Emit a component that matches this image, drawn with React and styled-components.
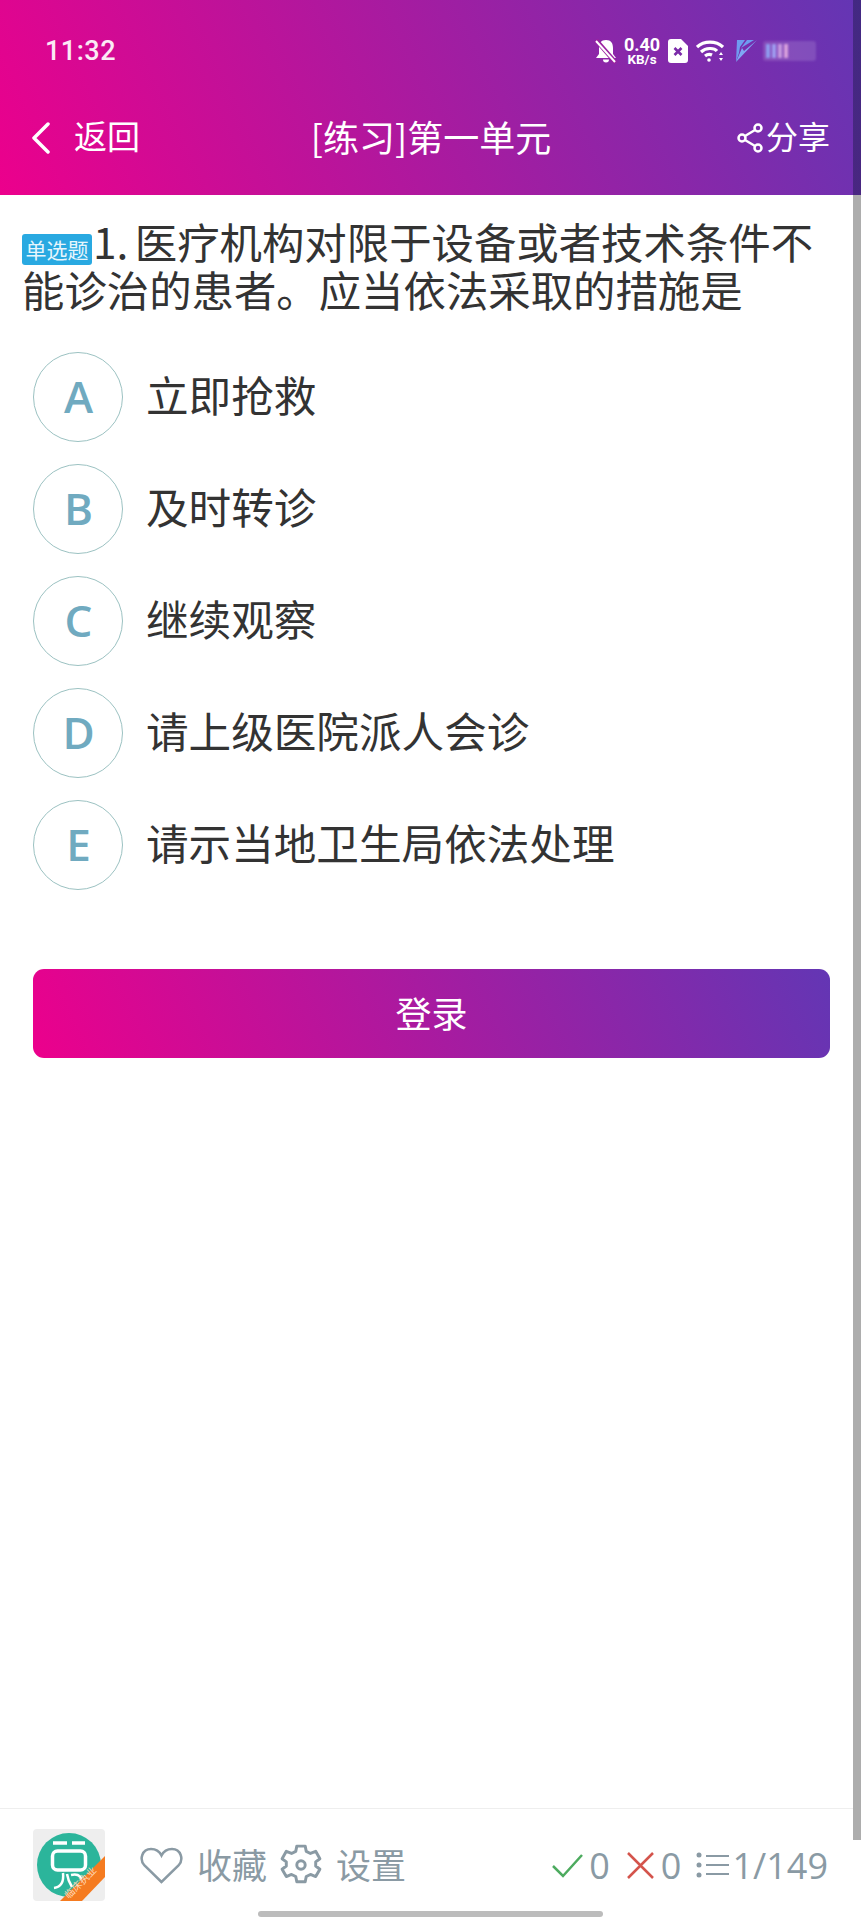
import React from "react";
import styled, { createGlobalStyle } from "styled-components";

const GlobalStyle = createGlobalStyle`
html, body { margin: 0; padding: 0; background: #fff; }
* { box-sizing: border-box; }
`;

const brand = "linear-gradient(65deg, #ec008c 0%, #6336b4 100%)";
const cjk = `"Noto Sans CJK SC", "Noto Sans", sans-serif`;

const Page = styled.div`
position: relative;
width: 861px;
height: 1920px;
overflow: hidden;
display: flex;
flex-direction: column;
background: #fff;
font-family: ${cjk};
color: #333;
`;

const Header = styled.header`
height: 195px;
flex: none;
background: ${brand};
color: #fff;
`;

const StatusBar = styled.div`
height: 100px;
display: flex;
align-items: center;
justify-content: space-between;
padding: 2px 45px 0;
`;

const Clock = styled.span`
font-family: Roboto, sans-serif;
font-size: 27px;
font-weight: 500;
letter-spacing: 0.5px;
color: #fbeaf5;
`;

const StatusIcons = styled.div`
display: flex;
align-items: center;
`;

const NetSpeed = styled.div`
width: 40px;
margin: 0 6px 0 5px;
display: flex;
flex-direction: column;
align-items: center;
font-family: Roboto, sans-serif;
font-weight: 700;
`;

const NetValue = styled.span`
font-size: 18px;
line-height: 17px;
`;

const NetUnit = styled.span`
font-size: 13.5px;
line-height: 13px;
`;

const Battery = styled.div`
width: 53px;
height: 20px;
margin-left: 6px;
padding: 3px;
display: flex;
gap: 2px;
border-radius: 3px;
background: rgba(255, 255, 255, 0.14);
filter: blur(0.8px);
`;

const BatteryCell = styled.span`
width: 4px;
background: ${(p) => p.$color};
`;

const NavBar = styled.div`
height: 75px;
display: grid;
grid-template-columns: 1fr auto 1fr;
align-items: center;
padding: 0 31px 0 32px;
`;

const BackLink = styled.div`
display: flex;
align-items: center;
gap: 24px;
font-size: 33px;
`;

const NavLabel = styled.span`
padding-bottom: 5px;
`;

const NavTitle = styled.div`
font-size: 36px;
padding-bottom: 3px;
`;

const ShareLink = styled.div`
display: flex;
align-items: center;
justify-content: flex-end;
gap: 3px;
font-size: 32px;
`;

const Main = styled.main`
flex: 1;
`;

const Question = styled.div`
padding: 22px 26px 0 22px;
font-size: 42.4px;
line-height: 48px;
word-spacing: -3px;
color: #333;
`;

const TypeBadge = styled.span`
display: inline-block;
width: 70px;
height: 31px;
margin-right: 1px;
border-radius: 3px;
background: #29a9e1;
color: #e6f6fd;
font-size: 21px;
line-height: 30px;
text-align: center;
vertical-align: 1px;
`;

const OptionList = styled.div`
margin-top: 28px;
padding: 0 33px;
`;

const OptionRow = styled.div`
height: 112px;
display: flex;
align-items: center;
gap: 23px;
font-size: 42.6px;
color: #333;
`;

const OptionText = styled.span`
padding-bottom: 8px;
`;

const OptionKey = styled.span`
width: 90px;
height: 90px;
flex: none;
display: flex;
align-items: center;
justify-content: center;
padding: 0 0 3px 1px;
border: 1.5px solid #9cc2c2;
border-radius: 50%;
font-family: "Open Sans", sans-serif;
font-size: 44px;
font-weight: 600;
color: #70aac0;
`;

const LoginButton = styled.button`
display: block;
width: 797px;
height: 89px;
margin: 68px 0 0 33px;
padding: 0 0 4px;
border: 0;
border-radius: 11px;
background: ${brand};
color: #fff;
font-family: ${cjk};
font-size: 36px;
`;

const Footer = styled.footer`
height: 112px;
flex: none;
display: flex;
align-items: flex-start;
padding: 20px 33px 0;
border-top: 1px solid #eee;
color: #8a9aa4;
`;

const AppLogo = styled.svg`
width: 72px;
height: 72px;
flex: none;
margin-right: 35px;
`;

const FooterAction = styled.div`
height: 72px;
display: flex;
align-items: center;
gap: 14px;
margin-right: 13px;
font-size: 35px;
`;

const FooterLabel = styled.span`
padding-bottom: 3px;
`;

const Tally = styled.div`
height: 72px;
margin-left: auto;
display: flex;
align-items: center;
font-family: "Open Sans", sans-serif;
font-size: 36px;
`;

const TallyCount = styled.span`
margin: 0 ${(p) => p.$after}px 0 ${(p) => p.$before}px;
`;

const Scrollbar = styled.div`
position: absolute;
top: 0;
right: 0;
width: 8px;
height: 1840px;
background: linear-gradient(to bottom, rgba(40, 30, 90, 0.55) 0, rgba(40, 30, 90, 0.55) 195px, #adadad 195px);
`;

const HomeBar = styled.div`
position: absolute;
left: 258px;
bottom: 3px;
width: 345px;
height: 6px;
border-radius: 3px;
background: #bcbcbc;
`;

const options = [
  { key: "A", text: "立即抢救" },
  { key: "B", text: "及时转诊" },
  { key: "C", text: "继续观察" },
  { key: "D", text: "请上级医院派人会诊" },
  { key: "E", text: "请示当地卫生局依法处理" },
];

const BellOff = () => (
  <svg width="22" height="25" viewBox="0 0 22 25">
    <path d="M11 1C6 1 4 4 4 9v6l-3 4h20l-3-4V9c0-5-2-8-7-8z" fill="#fff" />
    <path d="M8 20.500a3 3 0 0 0 6 0z" fill="#fff" />
    <path d="M1 1l20 23" stroke="#9a22a0" strokeWidth="4.500" />
    <path d="M1 2l19 21" stroke="#fff" strokeWidth="2" />
  </svg>
);

const SimOff = () => (
  <svg width="20" height="24" viewBox="0 0 20 24">
    <path d="M3 0h10l7 7v14a3 3 0 0 1-3 3H3a3 3 0 0 1-3-3V3a3 3 0 0 1 3-3z" fill="#fff" />
    <path d="M6.500 9l7 7M13.500 9l-7 7" stroke="#7a2aa8" strokeWidth="2.600" />
  </svg>
);

const Wifi = () => (
  <svg width="28" height="22" viewBox="0 0 28 22" style={{ marginLeft: 8 }} fill="none" stroke="#fff" strokeWidth="3.200">
    <path d="M1 7c7-6.500 19-6.500 26 0" />
    <path d="M5 12c5-4.500 13-4.500 16-1" />
    <path d="M9 16c2.500-2 5-2 7-1" />
    <circle cx="13" cy="20" r="1.800" fill="#fff" stroke="none" />
    <path d="M25 12l-2 3h4zM25 21l-2-3h4z" fill="#fff" stroke="none" />
  </svg>
);

const Bolt = () => (
  <svg width="25" height="24" viewBox="0 0 25 24" style={{ marginLeft: 8 }}>
    <path d="M5 1h8L8 8l-1 6-3 9z" fill="#6f9bf0" />
    <path d="M25 1L12 12l-2-3-6 14z" fill="#7fa8f4" />
    <path d="M15 1h7L9 9z" fill="#6f9bf0" />
  </svg>
);

const Heart = () => (
  <svg width="43" height="37" viewBox="0 0 43 37" fill="none" stroke="#8a9aa4" strokeWidth="2.500">
    <path d="M21.500 35L4.500 18.500C-1 12.500 2 2 11 2c5 0 8.500 2.500 10.500 6.500C23.500 4.500 27 2 32 2c9 0 12 10.500 6.500 16.500z" />
  </svg>
);

const Gear = () => (
  <svg width="42" height="42" viewBox="0 0 40 40" fill="none" stroke="#8a9aa4" strokeWidth="2.800" strokeLinejoin="round">
    <path d="M16 2h8l1 5 4 2 5-2 4 7-4 3v4l4 3-4 7-5-2-4 2-1 5h-8l-1-5-4-2-5 2-4-7 4-3v-4l-4-3 4-7 5 2 4-2z" />
    <circle cx="20" cy="20" r="4" />
  </svg>
);

const App = () => {
  return (
    <Page>
      <GlobalStyle />
      <Header>
        <StatusBar>
          <Clock>11:32</Clock>
          <StatusIcons>
            <BellOff />
            <NetSpeed>
              <NetValue>0.40</NetValue>
              <NetUnit>KB/s</NetUnit>
            </NetSpeed>
            <SimOff />
            <Wifi />
            <Bolt />
            <Battery>
              <BatteryCell $color="#8f9df0" />
              <BatteryCell $color="#9f9df0" />
              <BatteryCell $color="#c79ae0" />
              <BatteryCell $color="#d8a0dc" />
            </Battery>
          </StatusIcons>
        </StatusBar>
        <NavBar>
          <BackLink>
            <svg width="18" height="32" viewBox="0 0 18 32" fill="none" stroke="#fff" strokeWidth="3.500" strokeLinecap="round" strokeLinejoin="round">
              <path d="M16 2L2 16l14 14" />
            </svg>
            <NavLabel>返回</NavLabel>
          </BackLink>
          <NavTitle>[练习]第一单元</NavTitle>
          <ShareLink>
            <svg width="26" height="30" viewBox="0 0 26 30" fill="none" stroke="#fff" strokeWidth="2.500">
              <circle cx="21" cy="5" r="3.500" />
              <circle cx="5" cy="15" r="3.500" />
              <circle cx="21" cy="25" r="3.500" />
              <path d="M8 13L18 7M8 17l10 6" />
            </svg>
            <NavLabel>分享</NavLabel>
          </ShareLink>
        </NavBar>
      </Header>
      <Main>
        <Question>
          <TypeBadge>单选题</TypeBadge>1. 医疗机构对限于设备或者技术条件不能诊治的患者。应当依法采取的措施是
        </Question>
        <OptionList>
          {options.map((o) => (
            <OptionRow key={o.key}>
              <OptionKey>{o.key}</OptionKey>
              <OptionText>{o.text}</OptionText>
            </OptionRow>
          ))}
        </OptionList>
        <LoginButton>登录</LoginButton>
      </Main>
      <Footer>
        <AppLogo viewBox="0 0 72 72">
          <rect width="72" height="72" rx="4" fill="#eeeeee" />
          <circle cx="36" cy="36" r="32" fill="#2bb59b" />
          <g fill="none" stroke="#fff" strokeWidth="3.500">
            <path d="M20 14h14M39 14h13" />
            <rect x="19.500" y="22" width="33" height="19" rx="5" />
            <path d="M30 44c1 9-2 14-9 15M34 45c1 6 3 10 5 13M38 46c8-2 12 2 11 11" strokeWidth="2.500" />
          </g>
          <path d="M72 27v21L49 72H27z" fill="#f57b20" />
          <text transform="translate(50 56) rotate(-45)" textAnchor="middle" fontSize="10" fill="#ffd9b8">临床执业</text>
        </AppLogo>
        <FooterAction>
          <Heart />
          <FooterLabel>收藏</FooterLabel>
        </FooterAction>
        <FooterAction>
          <Gear />
          <FooterLabel>设置</FooterLabel>
        </FooterAction>
        <Tally>
          <svg width="31" height="25" viewBox="0 0 31 25" fill="none" stroke="#4dab5f" strokeWidth="2.500">
            <path d="M1 13l10 10L30 2" />
          </svg>
          <TallyCount $before={6} $after={17}>0</TallyCount>
          <svg width="27" height="27" viewBox="0 0 27 27" fill="none" stroke="#d4544c" strokeWidth="2.500">
            <path d="M1 1l25 25M26 1L1 26" />
          </svg>
          <TallyCount $before={7} $after={15}>0</TallyCount>
          <svg width="33" height="26" viewBox="0 0 33 26" fill="none" stroke="#8a9aa4" strokeWidth="2">
            <circle cx="3" cy="3" r="2.500" fill="#8a9aa4" stroke="none" />
            <circle cx="3" cy="13" r="2.500" fill="#8a9aa4" stroke="none" />
            <circle cx="3" cy="23" r="2.500" fill="#8a9aa4" stroke="none" />
            <path d="M10 4h23M10 13h23M10 22h23" />
          </svg>
          <TallyCount $before={3} $after={0}>1/149</TallyCount>
        </Tally>
      </Footer>
      <Scrollbar />
      <HomeBar />
    </Page>
  );
};

export default App;
